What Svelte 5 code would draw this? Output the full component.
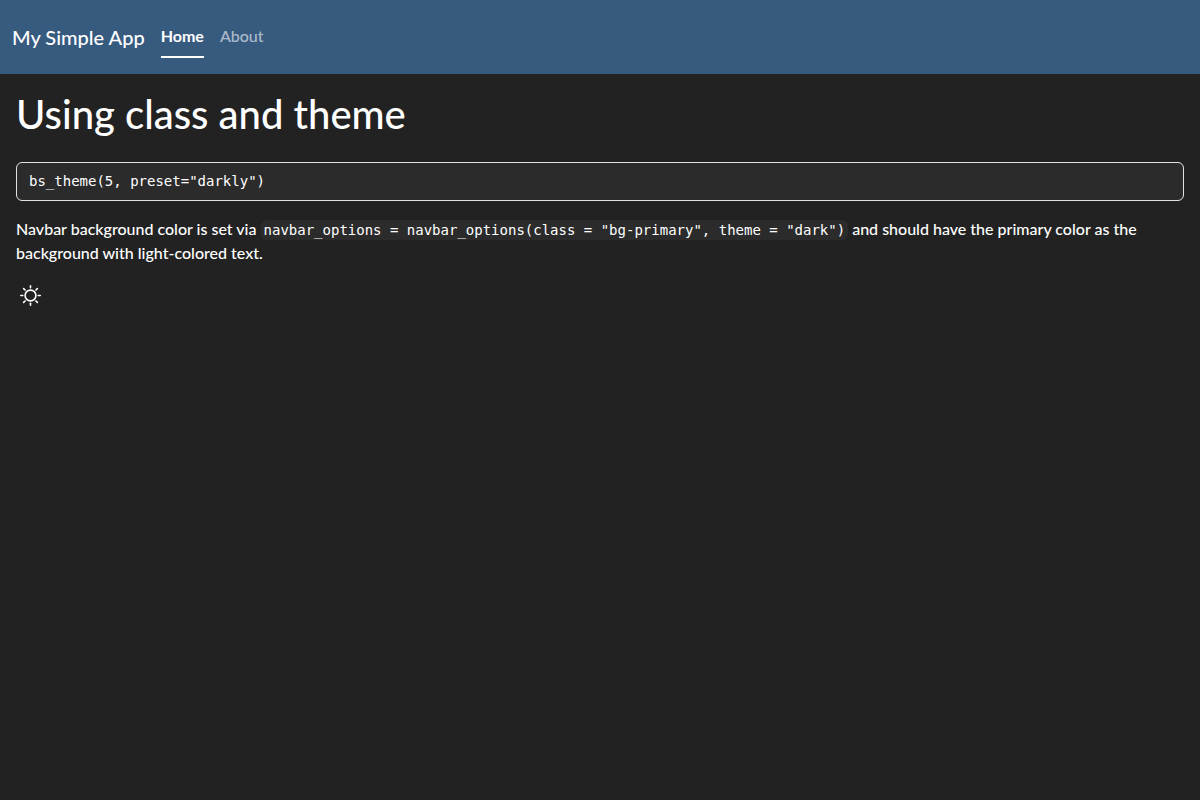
<script>
  let dark = $state(true);
  const rays = [0, 45, 90, 135, 180, 225, 270, 315];
</script>

<nav class="navbar">
  <a class="brand" href="#home">My Simple App</a>
  <ul class="links">
    <li><a class="link active" href="#home" aria-current="page">Home</a></li>
    <li><a class="link" href="#about">About</a></li>
  </ul>
</nav>

<main class="content">
  <h1>Using class and theme</h1>
  <pre class="block"><code>bs_theme(5, preset="darkly")</code></pre>
  <p>
    Navbar background color is set via
    <code class="inline">navbar_options = navbar_options(class = "bg-primary", theme = "dark")</code>
    and should have the primary color as the background with light-colored text.
  </p>
  <button class="mode" type="button" aria-label="Toggle color mode" aria-pressed={dark} onclick={() => (dark = !dark)}>
    <svg viewBox="0 0 21 21" aria-hidden="true">
      <circle cx="10.5" cy="10.5" r="5.4" />
      {#each rays as angle}
        <line x1="10.5" y1="0.8" x2="10.5" y2="2.8" transform="rotate({angle} 10.5 10.5)" />
      {/each}
    </svg>
  </button>
</main>

<style>
  :global(body) {
    margin: 0;
    background: #222;
    color: #fff;
    font: 500 16px/24px Lato, sans-serif;
  }
  .navbar {
    display: flex;
    align-items: center;
    gap: 16px;
    padding: 16px 12px;
    background: #375a7f;
  }
  .brand {
    padding: 6px 0;
    font-size: 20px;
    line-height: 30px;
    color: #fff;
    text-decoration: none;
  }
  .links {
    display: flex;
    gap: 16px;
    margin: 0;
    padding: 0;
    list-style: none;
  }
  .link {
    display: block;
    padding: 8px 0;
    border-bottom: 2px solid transparent;
    color: rgba(255, 255, 255, 0.6);
    text-decoration: none;
  }
  .link.active {
    border-color: #fff;
    color: #fff;
    font-weight: 700;
  }
  .content {
    padding: 16px;
  }
  h1 {
    margin: 0 0 24px;
    font-size: 40px;
    line-height: 48px;
    font-weight: 500;
  }
  code {
    font: 14px/21px "DejaVu Sans Mono", monospace;
  }
  .block {
    margin: 0 0 16px;
    padding: 8px 12px;
    border: 1px solid #dee2e6;
    border-radius: 6px;
    background: #2b2b2b;
    line-height: 21px;
    overflow: auto;
  }
  .block code {
    display: block;
  }
  p {
    margin: 0 0 16px;
  }
  .inline {
    padding: 2px 3px;
    border-radius: 6px;
    background: #2b2b2b;
  }
  .mode {
    display: flex;
    padding: 4px;
    border: 0;
    background: none;
    color: #fff;
    cursor: pointer;
  }
  svg {
    width: 21px;
    height: 21px;
    fill: none;
    stroke: currentColor;
    stroke-width: 1.6;
    stroke-linecap: round;
  }
</style>
